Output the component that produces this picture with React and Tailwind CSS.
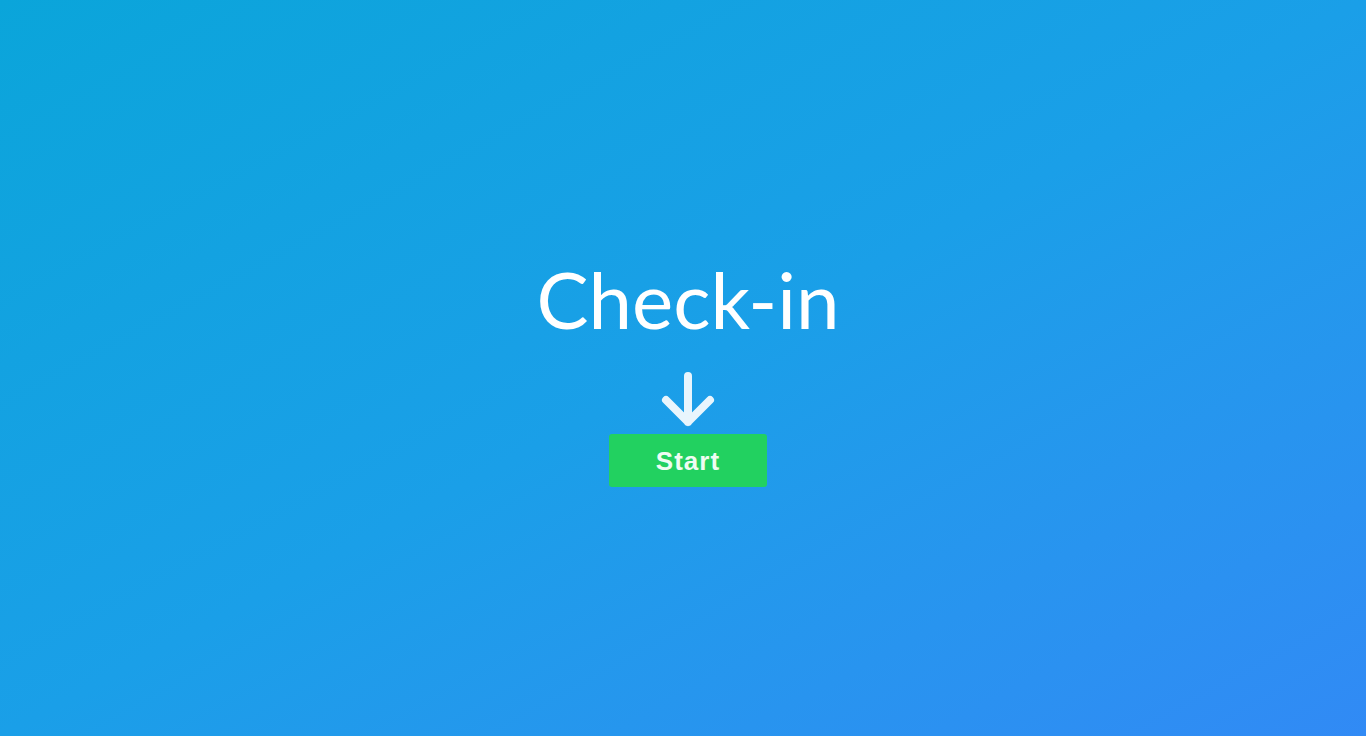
import React from 'react';

const DownArrow = () => (
  <svg width="54" height="56" viewBox="0 0 54 56" fill="none" className="text-white/90">
    <path d="M27 4 V50 M5 28 L27 50 L49 28" stroke="currentColor" strokeWidth="8" strokeLinecap="round" strokeLinejoin="round" />
  </svg>
);

const App = () => {
  return (
    <div className="min-h-screen w-full flex flex-col items-center justify-center pl-[10px] bg-gradient-to-br from-[#0aa5da] via-[#1a9fe8] to-[#318af5]">
      <div className="flex flex-col items-center pt-[10px]">
        <h1 className="text-[78px] leading-none text-white font-normal font-['Lato',sans-serif]">Check-in</h1>
        <div className="mt-[34px]">
          <DownArrow />
        </div>
        <button className="mt-[6px] w-[158px] h-[53px] rounded-[3px] bg-[#22d160] text-[#effcf2] text-[26px] font-bold tracking-[1px] pt-[2px] font-['Liberation_Sans',Arial,sans-serif]">
          Start
        </button>
      </div>
    </div>
  );
};

export default App;
